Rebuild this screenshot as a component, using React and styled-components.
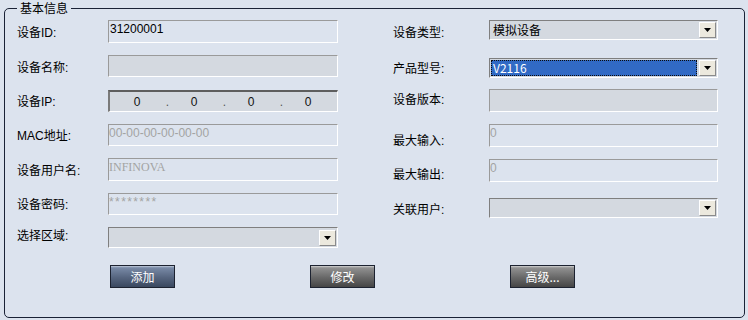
import React from "react";
import styled, { createGlobalStyle } from "styled-components";

const GlobalStyle = createGlobalStyle`
  html, body { margin: 0; padding: 0; background: #dce3ee; }
  body {
    font-family: "Liberation Sans", "Noto Sans CJK SC", sans-serif;
    font-size: 12px;
    color: #000;
  }
`;

const Page = styled.div`
  width: 748px;
  height: 320px;
  box-sizing: border-box;
  padding: 0 3px 2px 4px;
  background: #dce3ee;
`;

const Group = styled.fieldset`
  margin: 0;
  height: 100%;
  box-sizing: border-box;
  border: 1px solid #1a2236;
  border-radius: 5px;
  padding: 4px 0 0 12px;
  min-inline-size: 0;
  display: flex;
  flex-direction: column;
`;

const Legend = styled.legend`
  padding: 0 3px;
  margin: 0;
  font-size: 12px;
  line-height: 16px;
  font-family: "Noto Sans CJK SC", sans-serif;
`;

const Form = styled.div`
  display: flex;
  gap: 55px;
`;

const Column = styled.div`
  display: flex;
  flex-direction: column;
  width: ${(p) => p.$w}px;
`;

const Row = styled.div`
  display: flex;
  align-items: flex-start;
  height: ${(p) => p.$h}px;
  flex: none;
`;

const Label = styled.div`
  width: ${(p) => p.$w}px;
  flex: none;
  padding-top: ${(p) => p.$pt}px;
  line-height: 14px;
  white-space: nowrap;
`;

const TextBox = styled.div`
  width: ${(p) => p.$w}px;
  height: ${(p) => p.$h}px;
  box-sizing: border-box;
  border-style: solid;
  border-width: 1px;
  border-color: #9a9a9a #ffffff #ffffff #9a9a9a;
  background: ${(p) => (p.$gray ? "#d4d9e0" : "transparent")};
  color: ${(p) => (p.$muted ? "#a3a3a3" : "#000")};
  font-family: ${(p) =>
    p.$serif ? '"Liberation Serif", serif' : '"Liberation Sans", sans-serif'};
  letter-spacing: ${(p) => (p.$wide ? "1.4px" : "normal")};
  padding: 1px 0 0 ${(p) => (p.$muted ? 0 : 1)}px;
  line-height: 14px;
  font-size: 12px;
  white-space: nowrap;
  overflow: hidden;
`;

const IpBox = styled.div`
  width: ${(p) => p.$w}px;
  height: ${(p) => p.$h}px;
  box-sizing: border-box;
  border-style: solid;
  border-width: 2px 1px 1px 2px;
  border-color: #5e5e5e #ffffff #ffffff #7a7a7a;
  background: #d4d9e0;
  display: flex;
  align-items: center;
  padding-left: 8px;
  font-size: 12px;
`;

const Octet = styled.span`
  width: 38px;
  text-align: center;
  color: #111;
`;

const Dot = styled.span`
  width: 19px;
  box-sizing: border-box;
  text-align: right;
  padding-right: 6px;
  color: #555;
`;

const SelectBox = styled.div`
  width: ${(p) => p.$w}px;
  height: ${(p) => p.$h}px;
  box-sizing: border-box;
  border-style: solid;
  border-width: 1px;
  border-color: #7f7f7f #ffffff #ffffff #7f7f7f;
  background: #d4d9e0;
  display: flex;
  align-items: stretch;
  padding: 1px;
  gap: 2px;
`;

const SelectValue = styled.div`
  flex: 1;
  display: flex;
  align-items: center;
  box-sizing: border-box;
  padding-left: 1px;
  font-family: "Noto Sans CJK SC", sans-serif;
  line-height: 14px;
  background: ${(p) => (p.$selected ? "#316ac5" : "transparent")};
  color: ${(p) => (p.$selected ? "#fff" : "#000")};
  border: 1px ${(p) => (p.$selected ? "dotted #0b0b0b" : "solid transparent")};
`;

const DropButton = styled.div`
  width: 17px;
  flex: none;
  align-self: center;
  height: 16px;
  box-sizing: border-box;
  background: #ece9de;
  border-style: solid;
  border-width: 1px;
  border-color: #ffffff #8a8a8a #8a8a8a #ffffff;
  display: flex;
  align-items: center;
  justify-content: center;
`;

const Buttons = styled.div`
  display: flex;
  gap: 135px;
  margin-top: 16px;
  padding-left: 93px;
`;

const Button = styled.button`
  width: 65px;
  height: 23px;
  box-sizing: border-box;
  border: 1px solid #1c2230;
  padding: 0;
  margin: 0;
  color: #fff;
  font-size: 12px;
  font-family: "Noto Sans CJK SC", sans-serif;
  line-height: 21px;
  text-align: center;
  cursor: pointer;
  background: ${(p) =>
    p.$primary
      ? "linear-gradient(#9aa9c2 0%, #7687a3 12%, #56657f 55%, #3a485f 100%)"
      : "linear-gradient(#b5b5b5 0%, #8e8e8e 12%, #686868 55%, #454545 100%)"};
  box-shadow: inset 0 1px 0 rgba(255, 255, 255, 0.25);
`;

const Arrow = () => (
  <svg width="7" height="4" viewBox="0 0 7 4">
    <polygon points="0,0 7,0 3.5,4" fill="#000" />
  </svg>
);

const Control = ({ c, w }) => {
  if (c.type === "select")
    return (
      <SelectBox $w={w} $h={c.h}>
        <SelectValue $selected={c.selected}>{c.value}</SelectValue>
        <DropButton>
          <Arrow />
        </DropButton>
      </SelectBox>
    );
  if (c.type === "ip")
    return (
      <IpBox $w={w} $h={c.h}>
        <Octet>0</Octet>
        <Dot>.</Dot>
        <Octet>0</Octet>
        <Dot>.</Dot>
        <Octet>0</Octet>
        <Dot>.</Dot>
        <Octet>0</Octet>
      </IpBox>
    );
  return (
    <TextBox
      $w={w}
      $h={c.h}
      $gray={c.gray}
      $muted={c.muted}
      $serif={c.serif}
      $wide={c.wide}
    >
      {c.value}
    </TextBox>
  );
};

const left = [
  { label: "设备ID:", rowH: 35, pt: 6, type: "text", h: 23, value: "31200001" },
  { label: "设备名称:", rowH: 35, pt: 6, type: "text", h: 22, gray: true, value: "" },
  { label: "设备IP:", rowH: 34, pt: 5, type: "ip", h: 22 },
  { label: "MAC地址:", rowH: 34, pt: 5, type: "text", h: 22, muted: true, value: "00-00-00-00-00-00" },
  { label: "设备用户名:", rowH: 35, pt: 6, type: "text", h: 23, muted: true, serif: true, value: "INFINOVA" },
  { label: "设备密码:", rowH: 34, pt: 5, type: "text", h: 22, muted: true, wide: true, value: "********" },
  { label: "选择区域:", rowH: 22, pt: 2, type: "select", h: 21, value: "" },
];

const right = [
  { label: "设备类型:", rowH: 38, pt: 6, type: "select", h: 20, value: "模拟设备" },
  { label: "产品型号:", rowH: 31, pt: 4, type: "select", h: 20, value: "V2116", selected: true },
  { label: "设备版本:", rowH: 35, pt: 4, type: "text", h: 23, gray: true, value: "" },
  { label: "最大输入:", rowH: 35, pt: 10, type: "text", h: 23, muted: true, value: "0" },
  { label: "最大输出:", rowH: 39, pt: 9, type: "text", h: 23, muted: true, value: "0" },
  { label: "关联用户:", rowH: 20, pt: 5, type: "select", h: 20, value: "" },
];

export default function App() {
  return (
    <>
      <GlobalStyle />
      <Page>
        <Group>
          <Legend>基本信息</Legend>
          <Form>
            <Column $w={321}>
              {left.map((r) => (
                <Row key={r.label} $h={r.rowH}>
                  <Label $w={91} $pt={r.pt}>
                    {r.label}
                  </Label>
                  <Control c={r} w={230} />
                </Row>
              ))}
            </Column>
            <Column $w={325}>
              {right.map((r) => (
                <Row key={r.label} $h={r.rowH}>
                  <Label $w={96} $pt={r.pt}>
                    {r.label}
                  </Label>
                  <Control c={r} w={229} />
                </Row>
              ))}
            </Column>
          </Form>
          <Buttons>
            <Button $primary>添加</Button>
            <Button>修改</Button>
            <Button>高级...</Button>
          </Buttons>
        </Group>
      </Page>
    </>
  );
}
